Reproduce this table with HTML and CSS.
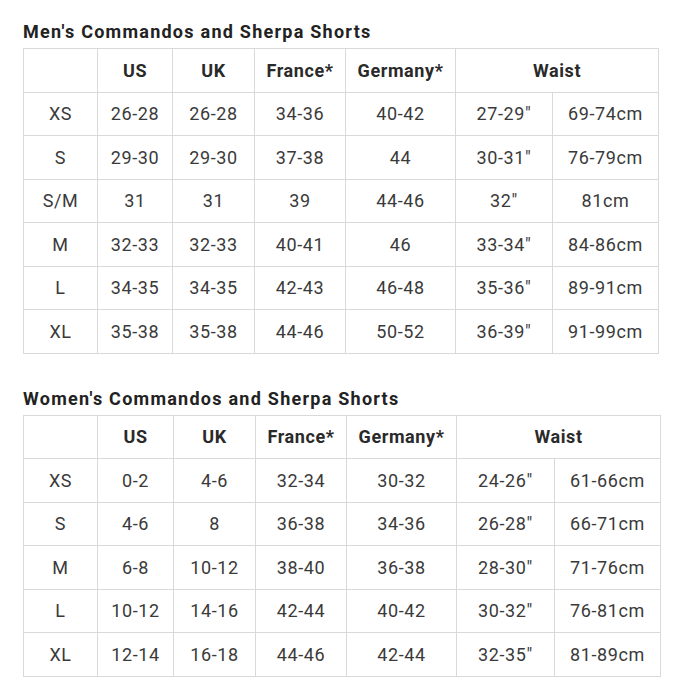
FILE: index.html
```html
<!DOCTYPE html>
<html lang="en">
<head>
<meta charset="utf-8">
<title>Size charts</title>
<link rel="stylesheet" href="styles.css">
</head>
<body>
<section class="chart">
  <h2 class="chart-title">Men's Commandos and Sherpa Shorts</h2>
  <table class="size-table">
    <colgroup>
      <col class="c1"><col class="c2"><col class="c3"><col class="c4"><col class="c5"><col class="c6"><col class="c7">
    </colgroup>
    <thead>
      <tr><th></th><th>US</th><th>UK</th><th>France*</th><th>Germany*</th><th colspan="2">Waist</th></tr>
    </thead>
    <tbody>
      <tr><td>XS</td><td>26-28</td><td>26-28</td><td>34-36</td><td>40-42</td><td>27-29"</td><td>69-74cm</td></tr>
      <tr><td>S</td><td>29-30</td><td>29-30</td><td>37-38</td><td>44</td><td>30-31"</td><td>76-79cm</td></tr>
      <tr><td>S/M</td><td>31</td><td>31</td><td>39</td><td>44-46</td><td>32"</td><td>81cm</td></tr>
      <tr><td>M</td><td>32-33</td><td>32-33</td><td>40-41</td><td>46</td><td>33-34"</td><td>84-86cm</td></tr>
      <tr><td>L</td><td>34-35</td><td>34-35</td><td>42-43</td><td>46-48</td><td>35-36"</td><td>89-91cm</td></tr>
      <tr><td>XL</td><td>35-38</td><td>35-38</td><td>44-46</td><td>50-52</td><td>36-39"</td><td>91-99cm</td></tr>
    </tbody>
  </table>
</section>
<section class="chart chart-women">
  <h2 class="chart-title">Women's Commandos and Sherpa Shorts</h2>
  <table class="size-table women">
    <colgroup>
      <col class="c1"><col class="c2"><col class="c3"><col class="c4"><col class="c5"><col class="c6"><col class="c7">
    </colgroup>
    <thead>
      <tr><th></th><th>US</th><th>UK</th><th>France*</th><th>Germany*</th><th colspan="2">Waist</th></tr>
    </thead>
    <tbody>
      <tr><td>XS</td><td>0-2</td><td>4-6</td><td>32-34</td><td>30-32</td><td>24-26"</td><td>61-66cm</td></tr>
      <tr><td>S</td><td>4-6</td><td>8</td><td>36-38</td><td>34-36</td><td>26-28"</td><td>66-71cm</td></tr>
      <tr><td>M</td><td>6-8</td><td>10-12</td><td>38-40</td><td>36-38</td><td>28-30"</td><td>71-76cm</td></tr>
      <tr><td>L</td><td>10-12</td><td>14-16</td><td>42-44</td><td>40-42</td><td>30-32"</td><td>76-81cm</td></tr>
      <tr><td>XL</td><td>12-14</td><td>16-18</td><td>44-46</td><td>42-44</td><td>32-35"</td><td>81-89cm</td></tr>
    </tbody>
  </table>
</section>
</body>
</html>
```
FILE: styles.css
```css
html, body {
  margin: 0;
  padding: 0;
  background: #ffffff;
}
body {
  font-family: Roboto, "Liberation Sans", Arial, sans-serif;
  color: #333333;
  padding: 21px 0 0 23px;
}
.chart-title {
  margin: 0 0 6px 0;
  font-size: 18px;
  font-weight: 700;
  line-height: 21px;
  letter-spacing: 1.25px;
  color: #222222;
}
.chart-women {
  margin-top: 34px;
}
.size-table {
  border-collapse: collapse;
  table-layout: fixed;
  width: 635px;
}
.size-table.women {
  width: 637px;
}
.size-table th,
.size-table td {
  border: 1px solid #d9d9d9;
  height: 43.5px;
  padding: 0;
  text-align: center;
  vertical-align: middle;
  font-size: 18px;
  line-height: 21px;
  letter-spacing: 0.6px;
  box-sizing: border-box;
}
.size-table th {
  font-weight: 700;
  color: #2a2a2a;
}
.size-table td {
  font-weight: 400;
  color: #3a3a3a;
}
.c1 { width: 74px; }
.c2 { width: 75px; }
.c3 { width: 82px; }
.c4 { width: 91px; }
.c5 { width: 110px; }
.c6 { width: 97px; }
.c7 { width: 106px; }
.women .c2 { width: 76px; }
.women .c6 { width: 98px; }
```
